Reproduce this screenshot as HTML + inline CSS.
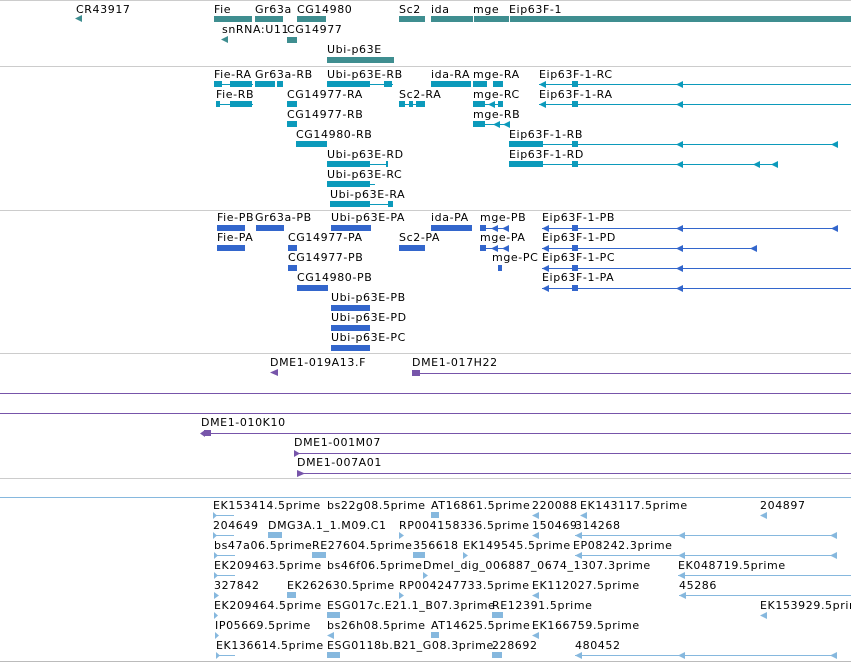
<!DOCTYPE html>
<html><head><meta charset="utf-8"><style>
body{margin:0;width:851px;height:662px;background:#fff;position:relative;overflow:hidden;font-family:"DejaVu Sans","Liberation Sans",sans-serif}
.t{position:absolute;font-size:11px;line-height:13px;letter-spacing:.6px;color:#000;white-space:nowrap}
.h{position:absolute;left:0;width:851px;height:1px}
.b{position:absolute;height:6px}
.l{position:absolute;height:1px}
.g{background:#3f8e90}.c{background:#0c9abb}.p{background:#3366cc}.v{background:#7755aa}.e{background:#86b8de}
.al{position:absolute;width:7px;height:7px;clip-path:polygon(0 50%,100% 0,100% 100%)}
.ar{position:absolute;width:7px;height:7px;clip-path:polygon(0 0,100% 50%,0 100%)}
</style></head><body>
<div class="h" style="top:0;background:#ccc"></div>
<!-- genes -->
<div class="t" style="left:76px;top:3px">CR43917</div><div class="al g" style="left:75px;top:15px"></div>
<div class="t" style="left:214px;top:3px">Fie</div><div class="b g" style="left:214px;top:16px;width:38px"></div>
<div class="t" style="left:255px;top:3px">Gr63a</div><div class="b g" style="left:255px;top:16px;width:28px"></div>
<div class="t" style="left:297px;top:3px">CG14980</div><div class="b g" style="left:297px;top:16px;width:29px"></div>
<div class="t" style="left:399px;top:3px">Sc2</div><div class="b g" style="left:399px;top:16px;width:26px"></div>
<div class="t" style="left:431px;top:3px">ida</div><div class="b g" style="left:431px;top:16px;width:42px"></div>
<div class="t" style="left:473px;top:3px">mge</div><div class="b g" style="left:474px;top:16px;width:35px"></div>
<div class="t" style="left:509px;top:3px">Eip63F-1</div><div class="b g" style="left:510px;top:16px;width:341px"></div>
<div class="t" style="left:222px;top:23px">snRNA:U11</div><div class="al g" style="left:221px;top:36px"></div>
<div class="t" style="left:287px;top:23px">CG14977</div><div class="b g" style="left:287px;top:37px;width:10px"></div>
<div class="t" style="left:327px;top:43px">Ubi-p63E</div><div class="b g" style="left:327px;top:57px;width:67px"></div>
<div class="h" style="top:66px;background:#ccc"></div>
<!-- transcripts -->
<div class="t" style="left:214px;top:68px">Fie-RA</div><div class="l c" style="left:214px;top:84px;width:39px"></div><div class="b c" style="left:214px;top:81px;width:8px"></div><div class="b c" style="left:230px;top:81px;width:22px"></div>
<div class="t" style="left:255px;top:68px">Gr63a-RB</div><div class="b c" style="left:255px;top:81px;width:20px"></div><div class="b c" style="left:277px;top:81px;width:6px"></div>
<div class="t" style="left:327px;top:68px">Ubi-p63E-RB</div><div class="b c" style="left:327px;top:81px;width:43px"></div><div class="l c" style="left:327px;top:84px;width:66px"></div><div class="b c" style="left:384px;top:81px;width:8px"></div>
<div class="t" style="left:431px;top:68px">ida-RA</div><div class="b c" style="left:431px;top:81px;width:40px"></div>
<div class="t" style="left:473px;top:68px">mge-RA</div><div class="b c" style="left:473px;top:81px;width:14px"></div><div class="b c" style="left:493px;top:81px;width:10px"></div>
<div class="t" style="left:539px;top:68px">Eip63F-1-RC</div><div class="l c" style="left:539px;top:84px;width:312px"></div><div class="al c" style="left:539px;top:81px"></div><div class="b c" style="left:572px;top:81px;width:6px"></div><div class="al c" style="left:676px;top:81px"></div>
<div class="t" style="left:216px;top:88px">Fie-RB</div><div class="l c" style="left:216px;top:104px;width:37px"></div><div class="b c" style="left:216px;top:101px;width:4px"></div><div class="b c" style="left:230px;top:101px;width:22px"></div>
<div class="t" style="left:287px;top:88px">CG14977-RA</div><div class="b c" style="left:287px;top:101px;width:10px"></div>
<div class="t" style="left:399px;top:88px">Sc2-RA</div><div class="l c" style="left:399px;top:104px;width:26px"></div><div class="b c" style="left:399px;top:101px;width:6px"></div><div class="b c" style="left:409px;top:101px;width:4px"></div><div class="b c" style="left:416px;top:101px;width:9px"></div>
<div class="t" style="left:473px;top:88px">mge-RC</div><div class="l c" style="left:473px;top:104px;width:30px"></div><div class="b c" style="left:473px;top:101px;width:12px"></div><div class="al c" style="left:488px;top:101px"></div><div class="b c" style="left:498px;top:101px;width:5px"></div>
<div class="t" style="left:539px;top:88px">Eip63F-1-RA</div><div class="l c" style="left:539px;top:104px;width:312px"></div><div class="al c" style="left:539px;top:101px"></div><div class="b c" style="left:572px;top:101px;width:6px"></div><div class="al c" style="left:676px;top:101px"></div>
<div class="t" style="left:287px;top:108px">CG14977-RB</div><div class="b c" style="left:287px;top:121px;width:10px"></div>
<div class="t" style="left:473px;top:108px">mge-RB</div><div class="l c" style="left:473px;top:124px;width:36px"></div><div class="b c" style="left:473px;top:121px;width:12px"></div><div class="al c" style="left:493px;top:121px"></div><div class="al c" style="left:503px;top:121px"></div>
<div class="t" style="left:296px;top:128px">CG14980-RB</div><div class="b c" style="left:296px;top:141px;width:31px"></div>
<div class="t" style="left:509px;top:128px">Eip63F-1-RB</div><div class="b c" style="left:509px;top:141px;width:34px"></div><div class="l c" style="left:509px;top:144px;width:327px"></div><div class="b c" style="left:572px;top:141px;width:6px"></div><div class="al c" style="left:676px;top:141px"></div><div class="al c" style="left:831px;top:141px"></div>
<div class="t" style="left:327px;top:148px">Ubi-p63E-RD</div><div class="b c" style="left:327px;top:161px;width:43px"></div><div class="l c" style="left:327px;top:164px;width:61px"></div><div class="b c" style="left:386px;top:161px;width:2px"></div>
<div class="t" style="left:509px;top:148px">Eip63F-1-RD</div><div class="b c" style="left:509px;top:161px;width:34px"></div><div class="l c" style="left:509px;top:164px;width:268px"></div><div class="b c" style="left:572px;top:161px;width:6px"></div><div class="al c" style="left:676px;top:161px"></div><div class="al c" style="left:753px;top:161px"></div><div class="al c" style="left:771px;top:161px"></div>
<div class="t" style="left:327px;top:168px">Ubi-p63E-RC</div><div class="b c" style="left:327px;top:181px;width:43px"></div><div class="l c" style="left:327px;top:184px;width:48px"></div>
<div class="t" style="left:330px;top:188px">Ubi-p63E-RA</div><div class="b c" style="left:330px;top:201px;width:40px"></div><div class="l c" style="left:330px;top:204px;width:63px"></div><div class="b c" style="left:388px;top:201px;width:5px"></div>
<div class="h" style="top:210px;background:#ccc"></div>
<!-- proteins -->
<div class="t" style="left:217px;top:211px">Fie-PB</div><div class="b p" style="left:217px;top:225px;width:28px"></div>
<div class="t" style="left:255px;top:211px">Gr63a-PB</div><div class="b p" style="left:256px;top:225px;width:28px"></div>
<div class="t" style="left:331px;top:211px">Ubi-p63E-PA</div><div class="b p" style="left:331px;top:225px;width:40px"></div>
<div class="t" style="left:431px;top:211px">ida-PA</div><div class="b p" style="left:431px;top:225px;width:41px"></div>
<div class="t" style="left:480px;top:211px">mge-PB</div><div class="l p" style="left:480px;top:228px;width:28px"></div><div class="b p" style="left:480px;top:225px;width:6px"></div><div class="al p" style="left:491px;top:225px"></div><div class="al p" style="left:502px;top:225px"></div>
<div class="t" style="left:542px;top:211px">Eip63F-1-PB</div><div class="l p" style="left:542px;top:228px;width:294px"></div><div class="al p" style="left:542px;top:225px"></div><div class="b p" style="left:572px;top:225px;width:6px"></div><div class="al p" style="left:676px;top:225px"></div><div class="al p" style="left:831px;top:225px"></div>
<div class="t" style="left:217px;top:231px">Fie-PA</div><div class="b p" style="left:217px;top:245px;width:28px"></div>
<div class="t" style="left:288px;top:231px">CG14977-PA</div><div class="b p" style="left:288px;top:245px;width:9px"></div>
<div class="t" style="left:399px;top:231px">Sc2-PA</div><div class="b p" style="left:399px;top:245px;width:26px"></div>
<div class="t" style="left:480px;top:231px">mge-PA</div><div class="l p" style="left:480px;top:248px;width:28px"></div><div class="b p" style="left:480px;top:245px;width:6px"></div><div class="al p" style="left:491px;top:245px"></div><div class="al p" style="left:502px;top:245px"></div>
<div class="t" style="left:542px;top:231px">Eip63F-1-PD</div><div class="l p" style="left:542px;top:248px;width:214px"></div><div class="al p" style="left:542px;top:245px"></div><div class="b p" style="left:572px;top:245px;width:6px"></div><div class="al p" style="left:676px;top:245px"></div><div class="al p" style="left:750px;top:245px"></div>
<div class="t" style="left:288px;top:251px">CG14977-PB</div><div class="b p" style="left:288px;top:265px;width:9px"></div>
<div class="t" style="left:492px;top:251px">mge-PC</div><div class="b p" style="left:498px;top:265px;width:4px"></div>
<div class="t" style="left:542px;top:251px">Eip63F-1-PC</div><div class="l p" style="left:542px;top:268px;width:309px"></div><div class="al p" style="left:542px;top:265px"></div><div class="b p" style="left:572px;top:265px;width:6px"></div><div class="al p" style="left:676px;top:265px"></div>
<div class="t" style="left:297px;top:271px">CG14980-PB</div><div class="b p" style="left:297px;top:285px;width:31px"></div>
<div class="t" style="left:542px;top:271px">Eip63F-1-PA</div><div class="l p" style="left:542px;top:288px;width:309px"></div><div class="al p" style="left:542px;top:285px"></div><div class="b p" style="left:572px;top:285px;width:6px"></div><div class="al p" style="left:676px;top:285px"></div>
<div class="t" style="left:331px;top:291px">Ubi-p63E-PB</div><div class="b p" style="left:331px;top:305px;width:39px"></div>
<div class="t" style="left:331px;top:311px">Ubi-p63E-PD</div><div class="b p" style="left:331px;top:325px;width:39px"></div>
<div class="t" style="left:331px;top:331px">Ubi-p63E-PC</div><div class="b p" style="left:331px;top:345px;width:39px"></div>
<div class="h" style="top:353px;background:#ccc"></div>
<!-- clones -->
<div class="t" style="left:270px;top:356px">DME1-019A13.F</div><div class="al v" style="left:270px;top:369px;width:8px"></div>
<div class="t" style="left:412px;top:356px">DME1-017H22</div><div class="b v" style="left:412px;top:370px;width:8px"></div><div class="l v" style="left:412px;top:373px;width:439px"></div>
<div class="h v" style="top:393px"></div>
<div class="h v" style="top:413px"></div>
<div class="t" style="left:201px;top:416px">DME1-010K10</div><div class="b v" style="left:204px;top:430px;width:7px"></div><div class="al v" style="left:200px;top:430px;width:5px"></div><div class="l v" style="left:201px;top:433px;width:650px"></div>
<div class="t" style="left:294px;top:436px">DME1-001M07</div><div class="ar v" style="left:294px;top:450px;width:6px"></div><div class="l v" style="left:294px;top:453px;width:557px"></div>
<div class="t" style="left:297px;top:456px">DME1-007A01</div><div class="ar v" style="left:297px;top:470px;width:8px"></div><div class="l v" style="left:297px;top:473px;width:554px"></div>
<div class="h" style="top:478px;background:#ccc"></div>
<div class="h e" style="top:497px"></div>
<!-- ESTs -->
<div class="t" style="left:213px;top:499px">EK153414.5prime</div><div class="l e" style="left:213px;top:515px;width:21px"></div><div class="ar e" style="left:213px;top:512px;width:4px"></div>
<div class="t" style="left:327px;top:499px">bs22g08.5prime</div>
<div class="t" style="left:431px;top:499px">AT16861.5prime</div><div class="b e" style="left:431px;top:512px;width:8px"></div>
<div class="t" style="left:532px;top:499px">220088</div><div class="al e" style="left:532px;top:512px"></div>
<div class="t" style="left:580px;top:499px">EK143117.5prime</div><div class="al e" style="left:580px;top:512px"></div>
<div class="t" style="left:760px;top:499px">204897</div><div class="al e" style="left:760px;top:512px"></div>
<div class="t" style="left:213px;top:519px">204649</div><div class="l e" style="left:213px;top:535px;width:21px"></div><div class="ar e" style="left:213px;top:532px;width:4px"></div>
<div class="t" style="left:268px;top:519px">DMG3A.1_1.M09.C1</div><div class="b e" style="left:268px;top:532px;width:14px"></div>
<div class="t" style="left:399px;top:519px">RP004158336.5prime</div><div class="ar e" style="left:399px;top:532px;width:5px"></div>
<div class="t" style="left:532px;top:519px">150469</div><div class="al e" style="left:532px;top:532px"></div>
<div class="t" style="left:575px;top:519px">314268</div><div class="l e" style="left:575px;top:535px;width:262px"></div><div class="al e" style="left:575px;top:532px"></div><div class="al e" style="left:678px;top:532px"></div><div class="al e" style="left:830px;top:532px"></div>
<div class="t" style="left:214px;top:539px">bs47a06.5prime</div><div class="l e" style="left:214px;top:555px;width:21px"></div><div class="ar e" style="left:214px;top:552px;width:4px"></div>
<div class="t" style="left:312px;top:539px">RE27604.5prime</div><div class="b e" style="left:312px;top:552px;width:14px"></div>
<div class="t" style="left:413px;top:539px">356618</div><div class="b e" style="left:413px;top:552px;width:12px"></div>
<div class="t" style="left:463px;top:539px">EK149545.5prime</div><div class="ar e" style="left:463px;top:552px;width:5px"></div>
<div class="t" style="left:573px;top:539px">EP08242.3prime</div><div class="l e" style="left:575px;top:555px;width:262px"></div><div class="al e" style="left:575px;top:552px"></div><div class="al e" style="left:678px;top:552px"></div><div class="al e" style="left:830px;top:552px"></div>
<div class="t" style="left:214px;top:559px">EK209463.5prime</div><div class="l e" style="left:214px;top:575px;width:21px"></div><div class="ar e" style="left:214px;top:572px;width:4px"></div>
<div class="t" style="left:327px;top:559px">bs46f06.5prime</div>
<div class="t" style="left:423px;top:559px">Dmel_dig_006887_0674_1307.3prime</div><div class="ar e" style="left:423px;top:572px;width:5px"></div>
<div class="t" style="left:678px;top:559px">EK048719.5prime</div><div class="l e" style="left:678px;top:575px;width:173px"></div><div class="al e" style="left:678px;top:572px"></div>
<div class="t" style="left:214px;top:579px">327842</div><div class="ar e" style="left:214px;top:592px;width:5px"></div>
<div class="t" style="left:287px;top:579px">EK262630.5prime</div><div class="b e" style="left:287px;top:592px;width:9px"></div>
<div class="t" style="left:399px;top:579px">RP004247733.5prime</div><div class="ar e" style="left:399px;top:592px;width:5px"></div>
<div class="t" style="left:532px;top:579px">EK112027.5prime</div><div class="al e" style="left:532px;top:592px"></div>
<div class="t" style="left:679px;top:579px">45286</div><div class="l e" style="left:679px;top:595px;width:172px"></div><div class="al e" style="left:679px;top:592px"></div>
<div class="t" style="left:214px;top:599px">EK209464.5prime</div><div class="ar e" style="left:214px;top:612px;width:4px"></div>
<div class="t" style="left:327px;top:599px">ESG017c.E21.1_B07.3prime</div><div class="b e" style="left:327px;top:612px;width:13px"></div>
<div class="t" style="left:492px;top:599px">RE12391.5prime</div><div class="b e" style="left:492px;top:612px;width:11px"></div>
<div class="t" style="left:760px;top:599px">EK153929.5prime</div><div class="al e" style="left:760px;top:612px"></div>
<div class="t" style="left:215px;top:619px">IP05669.5prime</div><div class="ar e" style="left:215px;top:632px;width:4px"></div>
<div class="t" style="left:327px;top:619px">bs26h08.5prime</div><div class="al e" style="left:327px;top:632px"></div>
<div class="t" style="left:431px;top:619px">AT14625.5prime</div><div class="b e" style="left:431px;top:632px;width:8px"></div>
<div class="t" style="left:532px;top:619px">EK166759.5prime</div><div class="al e" style="left:532px;top:632px"></div>
<div class="t" style="left:216px;top:639px">EK136614.5prime</div><div class="l e" style="left:216px;top:655px;width:19px"></div><div class="ar e" style="left:216px;top:652px;width:4px"></div>
<div class="t" style="left:327px;top:639px">ESG0118b.B21_G08.3prime</div><div class="b e" style="left:327px;top:652px;width:13px"></div>
<div class="t" style="left:492px;top:639px">228692</div><div class="b e" style="left:492px;top:652px;width:10px"></div>
<div class="t" style="left:575px;top:639px">480452</div><div class="l e" style="left:575px;top:655px;width:262px"></div><div class="al e" style="left:575px;top:652px"></div><div class="al e" style="left:678px;top:652px"></div><div class="al e" style="left:830px;top:652px"></div>
<div class="h" style="top:661px;background:#bbb"></div>
</body></html>
